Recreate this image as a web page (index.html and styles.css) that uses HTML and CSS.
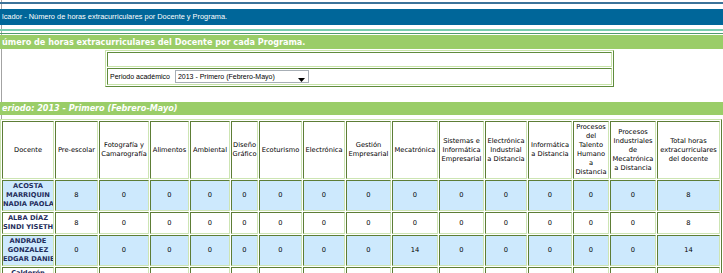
FILE: index.html
```html
<!DOCTYPE html>
<html lang="es">
<head>
<meta charset="utf-8">
<title>Número de horas extracurriculares por Docente y Programa</title>
<link rel="stylesheet" href="styles.css">
</head>
<body>
<div class="page">
  <div class="topline"></div>
  <div class="titlebar">lcador - Número de horas extracurriculares por Docente y Programa.</div>
  <div class="rule rule-a"></div>
  <div class="rule rule-b"></div>
  <div class="section">úmero de horas extracurriculares del Docente por cada Programa.</div>

  <table class="filters">
    <tr><td class="filters-empty"></td></tr>
    <tr>
      <td class="filters-cell">
        <span class="filters-label">Periodo académico</span>
        <span class="select-wrap">
          <select class="select"><option>2013 - Primero (Febrero-Mayo)</option></select>
          <svg class="select-arrow" width="7" height="4" viewBox="0 0 7 4"><path d="M0 0H7L3.5 4Z" fill="#000"/></svg>
        </span>
      </td>
    </tr>
  </table>

  <div class="section section-period">eriodo: 2013 - Primero (Febrero-Mayo)</div>

  <table class="report">
    <thead>
      <tr>
        <th class="w-doc">Docente</th>
        <th class="w-pre">Pre-escolar</th>
        <th class="w-foto">Fotografía y<br>Camarografía</th>
        <th class="w-ali">Alimentos</th>
        <th class="w-amb">Ambiental</th>
        <th class="w-dis">Diseño<br>Gráfico</th>
        <th class="w-eco">Ecoturismo</th>
        <th class="w-ele">Electrónica</th>
        <th class="w-ges">Gestión<br>Empresarial</th>
        <th class="w-mec">Mecatrónica</th>
        <th class="w-sis">Sistemas e<br>Informática<br>Empresarial</th>
        <th class="w-eid">Electrónica<br>Industrial<br>a Distancia</th>
        <th class="w-inf">Informática<br>a Distancia</th>
        <th class="w-pth">Procesos<br>del<br>Talento<br>Humano<br>a<br>Distancia</th>
        <th class="w-pim">Procesos<br>Industriales<br>de<br>Mecatrónica<br>a Distancia</th>
        <th class="w-tot">Total horas<br>extracurriculares<br>del docente</th>
      </tr>
    </thead>
    <tbody>
      <tr class="odd">
        <td class="name">ACOSTA<br>MARRIQUIN<br>NADIA PAOLA</td>
        <td>8</td><td>0</td><td>0</td><td>0</td><td>0</td><td>0</td><td>0</td><td>0</td><td>0</td><td>0</td><td>0</td><td>0</td><td>0</td><td>0</td><td>8</td>
      </tr>
      <tr>
        <td class="name">ALBA DÍAZ<br>SINDI YISETH</td>
        <td>8</td><td>0</td><td>0</td><td>0</td><td>0</td><td>0</td><td>0</td><td>0</td><td>0</td><td>0</td><td>0</td><td>0</td><td>0</td><td>0</td><td>8</td>
      </tr>
      <tr class="odd">
        <td class="name">ANDRADE<br>GONZALEZ<br>EDGAR DANIEL</td>
        <td>0</td><td>0</td><td>0</td><td>0</td><td>0</td><td>0</td><td>0</td><td>0</td><td>14</td><td>0</td><td>0</td><td>0</td><td>0</td><td>0</td><td>14</td>
      </tr>
      <tr>
        <td class="name">Calderón<br>&nbsp;<br>&nbsp;</td>
        <td>0</td><td>0</td><td>0</td><td>0</td><td>0</td><td>0</td><td>0</td><td>0</td><td>0</td><td>0</td><td>0</td><td>0</td><td>0</td><td>0</td><td>0</td>
      </tr>
    </tbody>
  </table>
</div>
</body>
</html>
```

FILE: styles.css
```css
html, body {
  margin: 0;
  padding: 0;
  background: #ffffff;
  overflow: hidden;
}

.page {
  margin-left: 1px;
  border-left: 1px solid #a3a3a3;
  padding-top: 2px;
  min-height: 300px;
}

.topline {
  margin-left: -2px;
  height: 2px;
  background: #3c7399;
  margin-bottom: 5px;
}

.titlebar {
  margin-left: -2px;
  height: 16px;
  line-height: 16px;
  background: #006699;
  color: #ffffff;
  font-family: "Liberation Sans", Arial, sans-serif;
  font-size: 7.4px;
  padding-left: 2px;
  white-space: nowrap;
  margin-bottom: 4px;
}

.rule {
  margin-left: -2px;
}

.rule-a {
  height: 2px;
  background: #77cdb0;
  margin-bottom: 2px;
}

.rule-b {
  height: 1px;
  background: #4f9b70;
  margin-bottom: 1px;
}

.section {
  margin-left: -2px;
  height: 14px;
  line-height: 14px;
  background: #9acd68;
  color: #ffffff;
  font-family: "DejaVu Sans", Verdana, sans-serif;
  font-weight: bold;
  font-size: 8.1px;
  padding-left: 2px;
  white-space: nowrap;
  margin-bottom: 1px;
}

.section-period {
  height: 13px;
  line-height: 13px;
  font-style: italic;
  margin-bottom: 4px;
}

/* filter box */
.filters {
  margin-left: 103px;
  width: 509px;
  border-collapse: separate;
  border-spacing: 1px;
  border: 1px solid;
  border-color: #c7e4a8 #5f8b3c #5f8b3c #c7e4a8;
  margin-bottom: 15px;
}

.filters td {
  border: 1px solid;
  border-color: #5f8b3c #c7e4a8 #c7e4a8 #5f8b3c;
  padding: 0;
}

.filters-empty {
  height: 13px;
}

.filters-cell {
  height: 15px;
  padding: 0 0 0 2px !important;
  font-family: "Liberation Sans", Arial, sans-serif;
  font-size: 7px;
  color: #000000;
  white-space: nowrap;
}

.filters-label {
  vertical-align: middle;
}

.select-wrap {
  position: relative;
  display: inline-block;
  vertical-align: middle;
  margin-left: 3px;
  line-height: 0;
}

.select {
  appearance: none;
  -webkit-appearance: none;
  width: 134px;
  height: 13px;
  margin: 0;
  border: 1px solid #a7aeb5;
  border-radius: 0;
  background: #ffffff;
  font-family: "Liberation Sans", Arial, sans-serif;
  font-size: 7px;
  color: #000000;
  padding: 0 0 0 2px;
  line-height: 11px;
}

.select-arrow {
  position: absolute;
  right: 4px;
  bottom: 1px;
}

/* report table */
.report {
  margin-left: -2px;
  width: 722px;
  table-layout: fixed;
  border-collapse: separate;
  border-spacing: 1px;
  border: 1px solid;
  border-color: #c9e4ad #5d7d36 #5d7d36 #c9e4ad;
  background: #ffffff;
  font-family: "DejaVu Sans", Verdana, sans-serif;
  font-size: 6.7px;
  line-height: 9px;
  color: #000000;
}

.report th,
.report td {
  box-sizing: border-box;
  border: 1px solid;
  border-color: #5d7d36 #cde5b3 #cde5b3 #5d7d36;
  padding: 1px 0;
  text-align: center;
  vertical-align: middle;
  white-space: nowrap;
  overflow: hidden;
}

.report th {
  font-weight: normal;
  background: #ffffff;
}

.report tr.odd td {
  background: #cde9fd;
}

.report td.name {
  font-weight: bold;
  color: #1f2d5c;
}

.w-doc { width: 52px; }
.w-pre { width: 43px; }
.w-foto { width: 50px; }
.w-ali { width: 39px; }
.w-amb { width: 40px; }
.w-dis { width: 27px; }
.w-eco { width: 43px; }
.w-ele { width: 42px; }
.w-ges { width: 45px; }
.w-mec { width: 46px; }
.w-sis { width: 45px; }
.w-eid { width: 42px; }
.w-inf { width: 44px; }
.w-pth { width: 36px; }
.w-pim { width: 46px; }
.w-tot { width: 63px; }
```
